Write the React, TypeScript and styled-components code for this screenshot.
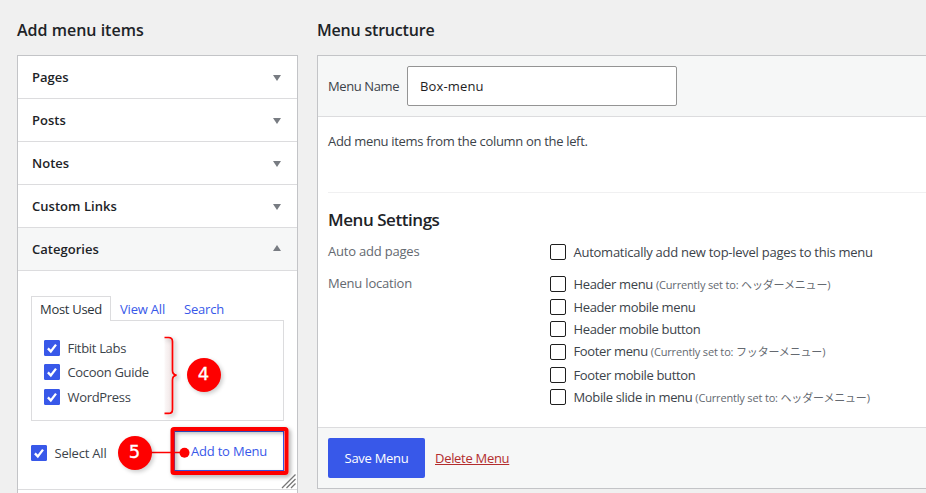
import React from 'react';
import styled, { createGlobalStyle } from 'styled-components';

const GlobalStyle = createGlobalStyle`
    * {
        box-sizing: border-box;
    }

    body {
        margin: 0;
        overflow: hidden;
        background: #f0f0f0;
        color: #3c434a;
        font: 13px/18px "Open Sans", "Noto Sans CJK JP", sans-serif;
        letter-spacing: -0.2px;
    }
`;

const Screen = styled.div`
    position: relative;
    display: flex;
    gap: 19px;
    width: 926px;
    height: 493px;
    padding: 17px 0 0 17px;
    overflow: hidden;
`;

const Sidebar = styled.aside`
    flex: 0 0 281px;
`;

const Main = styled.main`
    flex: 0 0 620px;
`;

const Title = styled.h2<{ $spacing?: number }>`
    margin: 0 0 12px;
    color: #1d2327;
    font-size: 16px;
    line-height: 26px;
    font-weight: 600;
    letter-spacing: ${(props) => props.$spacing || 0}px;
`;

const Accordion = styled.div`
    height: 460px;
    border: 1px solid #c3c4c7;
    background: #fff;
`;

const AccordionHead = styled.div<{ $open?: boolean }>`
    display: flex;
    justify-content: space-between;
    align-items: center;
    height: 43px;
    padding: 0 15px 0 14px;
    border-bottom: 1px solid #dcdcde;
    background: ${(props) => (props.$open ? '#f6f7f7' : '#fff')};
    color: #1d2327;
    font-weight: 600;
    letter-spacing: 0.03px;
`;

const AccordionBody = styled.div`
    height: 219px;
    padding: 25px 13px 0;
    border-bottom: 1px solid #dcdcde;
`;

const Tabs = styled.div`
    display: flex;
    height: 25px;
    margin-bottom: -1px;
`;

const Tab = styled.a<{ $active?: boolean; $width: number }>`
    width: ${(props) => props.$width}px;
    padding: 3px 0 0 8px;
    border: 1px solid ${(props) => (props.$active ? '#dcdcde' : 'transparent')};
    border-bottom: 0;
    background: ${(props) => (props.$active ? '#fff' : 'transparent')};
    color: ${(props) => (props.$active ? '#2c3338' : '#3858e9')};
    letter-spacing: ${(props) => (props.$active ? -0.3 : -0.2)}px;
    white-space: nowrap;
`;

const TabPanel = styled.div`
    display: flex;
    flex-direction: column;
    gap: 8.3px;
    height: 101px;
    padding: 19px 12px 0;
    border: 1px solid #dcdcde;
    letter-spacing: -0.32px;
`;

const CheckRow = styled.label`
    display: flex;
    align-items: center;
    gap: 7.5px;
    height: 16px;
    white-space: nowrap;
`;

const Box = styled.span<{ $checked?: boolean }>`
    display: flex;
    flex: 0 0 16px;
    height: 16px;
    border: 1px solid ${(props) => (props.$checked ? '#3858e9' : '#1e1e1e')};
    border-radius: ${(props) => (props.$checked ? 1 : 2)}px;
    background: ${(props) => (props.$checked ? '#3858e9' : '#fff')};
`;

const BodyActions = styled.div`
    display: flex;
    justify-content: space-between;
    align-items: flex-start;
    padding-top: 10px;

    ${CheckRow} {
        margin-top: 14px;
    }
`;

const AddButton = styled.button`
    width: 110px;
    height: 40px;
    padding: 0 0 1px;
    border: 1px solid #3858e9;
    background: #fff;
    color: #3858e9;
    font: inherit;
    letter-spacing: inherit;
`;

const Panel = styled.section`
    height: 434px;
    border: 1px solid #c3c4c7;
    background: #fff;
`;

const PanelHeader = styled.div`
    display: flex;
    align-items: center;
    gap: 8px;
    height: 61px;
    padding-left: 10px;
    border-bottom: 1px solid #dcdcde;
    background: #f6f7f7;
`;

const NameLabel = styled.label`
    width: 71px;
    letter-spacing: -0.4px;
    white-space: nowrap;
`;

const NameInput = styled.input`
    width: 270px;
    height: 40px;
    padding: 0 12px;
    border: 1px solid #949494;
    border-radius: 2px;
    background: #fff;
    color: #1e1e1e;
    font: inherit;
    letter-spacing: 0.15px;
`;

const PanelBody = styled.div`
    height: 310px;
    padding: 15px 0 0 10px;
`;

const Hint = styled.p`
    margin: 0;
    height: 60px;
    letter-spacing: -0.32px;
`;

const Settings = styled.div`
    border-top: 1px solid #f0f0f1;
    padding-top: 16px;
`;

const SettingsTitle = styled.h3`
    margin: 0 0 14px;
    color: #1d2327;
    font-size: 17px;
    line-height: 21px;
    font-weight: 600;
    letter-spacing: -0.45px;
`;

const Group = styled.div`
    display: grid;
    grid-template-columns: 222px 1fr;
    margin-bottom: 16px;
    letter-spacing: -0.26px;
`;

const GroupName = styled.span`
    margin-top: -2px;
    height: 18px;
    color: #646970;
    letter-spacing: -0.2px;
`;

const Options = styled.div`
    display: flex;
    flex-direction: column;
    gap: 6.67px;
    letter-spacing: -0.36px;
`;

const Current = styled.span`
    color: #646970;
    font-size: 11px;
    letter-spacing: -0.17px;
`;

const PanelFooter = styled.div`
    display: flex;
    align-items: center;
    gap: 10px;
    height: 61px;
    padding-left: 10px;
    border-top: 1px solid #dcdcde;
    background: #f6f7f7;
`;

const SaveButton = styled.button`
    width: 97px;
    height: 40px;
    padding: 0;
    border: 0;
    border-radius: 2px;
    background: #3858e9;
    color: #fff;
    font: inherit;
    letter-spacing: -0.3px;
`;

const DeleteLink = styled.a`
    color: #b32d2e;
    letter-spacing: -0.3px;
    text-decoration: underline;
`;

const Overlay = styled.svg`
    position: absolute;
    left: 0;
    top: 0;
    pointer-events: none;
`;

const Badge = styled.span<{ $x: number; $y: number }>`
    position: absolute;
    left: ${(props) => props.$x}px;
    top: ${(props) => props.$y}px;
    width: 34px;
    height: 34px;
    border-radius: 50%;
    background: #fe0000;
    box-shadow: 2px 2px 4px rgba(0, 0, 0, 0.2);
    color: #fff;
    font: 18px/32px "DejaVu Sans", sans-serif;
    letter-spacing: 0;
    text-align: center;
    -webkit-text-stroke: 0.3px #fff;
`;

const closedItems = ['Pages', 'Posts', 'Notes', 'Custom Links'];
const categories = ['Fitbit Labs', 'Cocoon Guide', 'WordPress'];
const locations = [
    { name: 'Header menu', current: 'ヘッダーメニュー' },
    { name: 'Header mobile menu' },
    { name: 'Header mobile button' },
    { name: 'Footer menu', current: 'フッターメニュー' },
    { name: 'Footer mobile button' },
    { name: 'Mobile slide in menu', current: 'ヘッダーメニュー' },
];

const Arrow = ({ up }: { up?: boolean }) => (
    <svg width="10" height="10" viewBox="0 0 10 10">
        <path d={up ? 'M1 7h8L5 1z' : 'M1 3h8L5 9z'} fill="#787c82" />
    </svg>
);

const Checkbox = ({ checked }: { checked?: boolean }) => (
    <Box $checked={checked}>
        {checked ? (
            <svg width="14" height="14" viewBox="0 0 14 14">
                <path d="M2.9 7.4l2.9 3L11 3.6" fill="none" stroke="#fff" strokeWidth="2.3" />
            </svg>
        ) : null}
    </Box>
);

const Annotations = () => (
    <React.Fragment>
        <Overlay width="310" height="493">
            <defs>
                <filter id="shadow" x="-30%" y="-30%" width="160%" height="160%">
                    <feDropShadow dx="2" dy="2" stdDeviation="2" floodColor="#000" floodOpacity="0.35" />
                </filter>
                <linearGradient id="braceFill">
                    <stop offset="0" stopColor="#a05050" stopOpacity="0.04" />
                    <stop offset="1" stopColor="#a05050" stopOpacity="0.16" />
                </linearGradient>
            </defs>
            <rect x="164.5" y="338" width="8" height="75" fill="url(#braceFill)" />
            <g fill="none" stroke="#fe0000">
                <path
                    d="M164.5 337.5h4q4 0 4 4v29q0 4 4 4.7q-4 0.7-4 4.7v29.5q0 4-4 4h-4"
                    strokeWidth="1.7"
                    filter="url(#shadow)"
                />
                <rect x="172.5" y="429" width="114" height="44" rx="1.5" strokeWidth="4" filter="url(#shadow)" />
                <path d="M151 452.5h33" strokeWidth="1.7" />
            </g>
            <circle cx="184.5" cy="452.8" r="5" fill="#fe0000" />
            <path
                d="M282 488l13.5-13.5M286.5 488l9-9M291 488l4.5-4.5"
                stroke="#777"
                strokeWidth="1.3"
            />
        </Overlay>
        <Badge $x={186.5} $y={357.5}>4</Badge>
        <Badge $x={117.5} $y={435.5}>5</Badge>
    </React.Fragment>
);

const App = () => {
    return (
        <React.Fragment>
            <GlobalStyle />
            <Screen>
                <Sidebar>
                    <Title>Add menu items</Title>
                    <Accordion>
                        {closedItems.map((item) => (
                            <AccordionHead key={item}>
                                <span>{item}</span>
                                <Arrow />
                            </AccordionHead>
                        ))}
                        <AccordionHead $open>
                            <span>Categories</span>
                            <Arrow up />
                        </AccordionHead>
                        <AccordionBody>
                            <Tabs>
                                <Tab $active $width={80}>Most Used</Tab>
                                <Tab $width={64}>View All</Tab>
                                <Tab $width={60}>Search</Tab>
                            </Tabs>
                            <TabPanel>
                                {categories.map((name) => (
                                    <CheckRow key={name}>
                                        <Checkbox checked />
                                        <span>{name}</span>
                                    </CheckRow>
                                ))}
                            </TabPanel>
                            <BodyActions>
                                <CheckRow>
                                    <Checkbox checked />
                                    <span>Select All</span>
                                </CheckRow>
                                <AddButton>Add to Menu</AddButton>
                            </BodyActions>
                        </AccordionBody>
                    </Accordion>
                </Sidebar>
                <Main>
                    <Title $spacing={-0.2}>Menu structure</Title>
                    <Panel>
                        <PanelHeader>
                            <NameLabel>Menu Name</NameLabel>
                            <NameInput defaultValue="Box-menu" />
                        </PanelHeader>
                        <PanelBody>
                            <Hint>Add menu items from the column on the left.</Hint>
                            <Settings>
                                <SettingsTitle>Menu Settings</SettingsTitle>
                                <Group>
                                    <GroupName>Auto add pages</GroupName>
                                    <CheckRow>
                                        <Checkbox />
                                        <span>Automatically add new top-level pages to this menu</span>
                                    </CheckRow>
                                </Group>
                                <Group>
                                    <GroupName>Menu location</GroupName>
                                    <Options>
                                        {locations.map((item) => (
                                            <CheckRow key={item.name}>
                                                <Checkbox />
                                                <span>
                                                    {item.name}{' '}
                                                    {item.current ? (
                                                        <Current>(Currently set to: {item.current})</Current>
                                                    ) : null}
                                                </span>
                                            </CheckRow>
                                        ))}
                                    </Options>
                                </Group>
                            </Settings>
                        </PanelBody>
                        <PanelFooter>
                            <SaveButton>Save Menu</SaveButton>
                            <DeleteLink>Delete Menu</DeleteLink>
                        </PanelFooter>
                    </Panel>
                </Main>
                <Annotations />
            </Screen>
        </React.Fragment>
    );
};

export default App;
